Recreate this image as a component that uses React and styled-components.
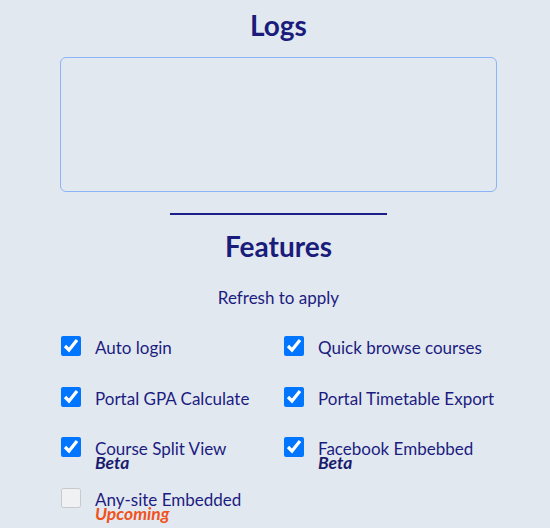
import { createGlobalStyle, styled } from "styled-components";

const GlobalStyle = createGlobalStyle`
  html, body {
    margin: 0;
    background: #e2e8f0;
  }
  body {
    font-family: Lato, "Noto Sans", sans-serif;
    color: #1c1c80;
  }
`;

const Wrapper = styled.div`
  width: 550px;
  height: 528px;
  box-sizing: border-box;
  padding-left: 7px;
  overflow: hidden;
  display: flex;
  flex-direction: column;
  align-items: center;
`;

const Title = styled.h2`
  margin: ${props => props.$top}px 0 0;
  font-size: 28px;
  font-weight: 700;
  line-height: 36px;
  color: #1a1c7c;
`;

const LogBox = styled.div`
  margin-top: 14px;
  width: 437px;
  height: 135px;
  box-sizing: border-box;
  border: 1px solid #8cb2f8;
  border-radius: 6px;
`;

const Divider = styled.hr`
  margin: 21px 0 0;
  width: 217px;
  border: none;
  height: 2px;
  background: #1b1f8a;
`;

const Hint = styled.p`
  margin: 24px 0 0;
  font-size: 17px;
  line-height: 20px;
`;

const FeatureGrid = styled.div`
  margin-top: 28px;
  align-self: flex-start;
  margin-left: 54px;
  display: grid;
  grid-template-columns: 223px 223px;
  grid-auto-rows: 20px;
  row-gap: 30.6px;
`;

const Feature = styled.label`
  display: flex;
  align-items: flex-start;
  gap: 14px;
`;

const Box = styled.input`
  width: 20px;
  height: 20px;
  margin: 0;
  flex: none;
`;

const Text = styled.div`
  display: flex;
  flex-direction: column;
  padding-top: 2px;
`;

const Name = styled.span`
  font-size: 17px;
  line-height: 20px;
  color: #1c1c80;
`;

const Tag = styled.span`
  margin-top: -3px;
  font-size: 17.5px;
  line-height: 13px;
  font-weight: 700;
  font-style: italic;
  color: ${props => (props.$upcoming ? "#f0521c" : "#1a1c6e")};
`;

const features = [
  { name: "Auto login", on: true },
  { name: "Quick browse courses", on: true },
  { name: "Portal GPA Calculate", on: true },
  { name: "Portal Timetable Export", on: true },
  { name: "Course Split View", on: true, tag: "Beta" },
  { name: "Facebook Embebbed", on: true, tag: "Beta" },
  { name: "Any-site Embedded", on: false, tag: "Upcoming", disabled: true },
];

const App = () => {
  return (
    <>
      <GlobalStyle />
      <Wrapper>
        <Title $top={7}>Logs</Title>
        <LogBox />
        <Divider />
        <Title $top={13}>Features</Title>
        <Hint>Refresh to apply</Hint>
        <FeatureGrid>
          {features.map(f => (
            <Feature key={f.name}>
              <Box type="checkbox" defaultChecked={f.on} disabled={f.disabled} />
              <Text>
                <Name>{f.name}</Name>
                {f.tag && <Tag $upcoming={f.tag === "Upcoming"}>{f.tag}</Tag>}
              </Text>
            </Feature>
          ))}
        </FeatureGrid>
      </Wrapper>
    </>
  );
};

export default App;
